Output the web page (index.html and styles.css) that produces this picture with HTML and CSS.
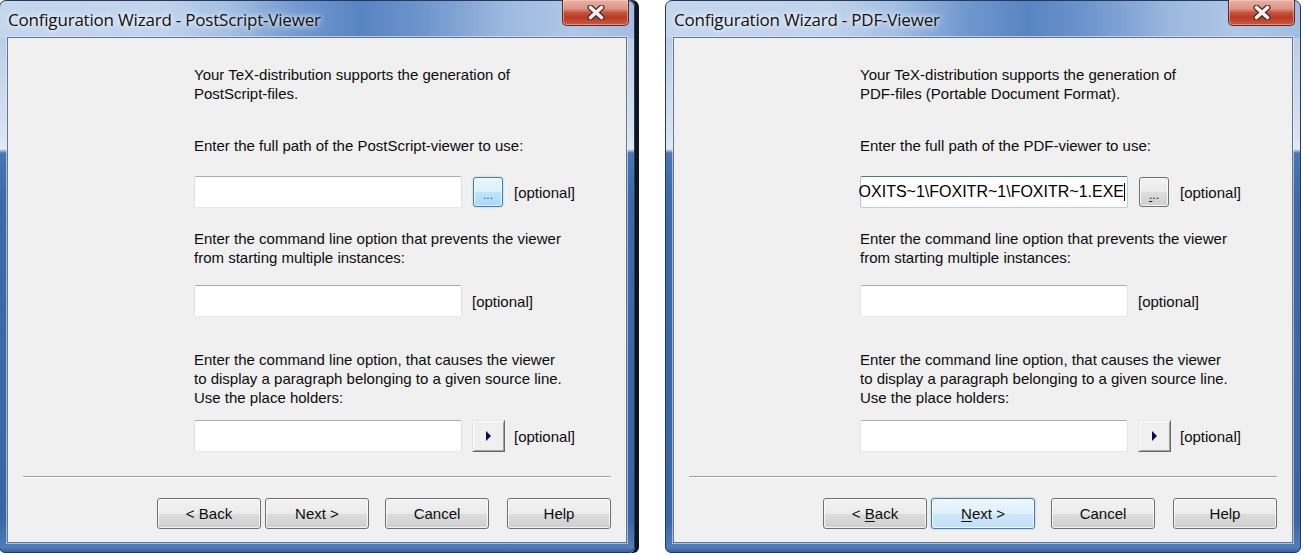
FILE: index.html
```html
<!DOCTYPE html>
<html>
<head>
<meta charset="utf-8">
<title>Configuration Wizard</title>
<link rel="stylesheet" href="styles.css">
</head>
<body>
<div class="window win-left">
  <div class="titlebar"><span class="title">Configuration Wizard - PostScript-Viewer</span></div>
  <div class="close"><svg width="20" height="15" viewBox="0 0 20 15"><path d="M4.5 2.5 L15.5 12.5 M15.5 2.5 L4.5 12.5" stroke="#4a2a26" stroke-width="6" stroke-linecap="round"/><path d="M4.5 2.5 L15.5 12.5 M15.5 2.5 L4.5 12.5" stroke="#f4f1f0" stroke-width="3.6" stroke-linecap="round"/></svg></div>
  <div class="client">
    <div class="content">
      <p class="para p1">Your TeX-distribution supports the generation of<br>PostScript-files.</p>
      <p class="para p2">Enter the full path of the PostScript-viewer to use:</p>
      <div class="row r1">
        <div class="input"></div>
        <div class="browse hover"><span>...</span></div>
        <span class="opt">[optional]</span>
      </div>
      <p class="para p3">Enter the command line option that prevents the viewer<br>from starting multiple instances:</p>
      <div class="row r2">
        <div class="input"></div>
        <span class="opt">[optional]</span>
      </div>
      <p class="para p4">Enter the command line option, that causes the viewer<br>to display a paragraph belonging to a given source line.<br>Use the place holders:</p>
      <div class="row r3">
        <div class="input"></div>
        <div class="arrow"><svg width="6" height="10" viewBox="0 0 6 10"><polygon points="0,0 5,5 0,10" fill="#0a0a50"/></svg></div>
        <span class="opt">[optional]</span>
      </div>
    </div>
    <div class="sep"></div>
    <div class="buttons">
      <div class="btn">&lt; Back</div>
      <div class="btn">Next &gt;</div>
      <div class="btn gap">Cancel</div>
      <div class="btn gap2">Help</div>
    </div>
  </div>
</div>

<div class="window win-right">
  <div class="titlebar"><span class="title">Configuration Wizard - PDF-Viewer</span></div>
  <div class="close"><svg width="20" height="15" viewBox="0 0 20 15"><path d="M4.5 2.5 L15.5 12.5 M15.5 2.5 L4.5 12.5" stroke="#4a2a26" stroke-width="6" stroke-linecap="round"/><path d="M4.5 2.5 L15.5 12.5 M15.5 2.5 L4.5 12.5" stroke="#f4f1f0" stroke-width="3.6" stroke-linecap="round"/></svg></div>
  <div class="client">
    <div class="content">
      <p class="para p1">Your TeX-distribution supports the generation of<br>PDF-files (Portable Document Format).</p>
      <p class="para p2">Enter the full path of the PDF-viewer to use:</p>
      <div class="row r1">
        <div class="input focus"><span class="val">OXITS~1\FOXITR~1\FOXITR~1.EXE</span><span class="caret"></span></div>
        <div class="browse"><span><u>.</u>..</span></div>
        <span class="opt">[optional]</span>
      </div>
      <p class="para p3">Enter the command line option that prevents the viewer<br>from starting multiple instances:</p>
      <div class="row r2">
        <div class="input"></div>
        <span class="opt">[optional]</span>
      </div>
      <p class="para p4">Enter the command line option, that causes the viewer<br>to display a paragraph belonging to a given source line.<br>Use the place holders:</p>
      <div class="row r3">
        <div class="input"></div>
        <div class="arrow"><svg width="6" height="10" viewBox="0 0 6 10"><polygon points="0,0 5,5 0,10" fill="#0a0a50"/></svg></div>
        <span class="opt">[optional]</span>
      </div>
    </div>
    <div class="sep"></div>
    <div class="buttons">
      <div class="btn">&lt;&nbsp;<u>B</u>ack</div>
      <div class="btn default"><u>N</u>ext &gt;</div>
      <div class="btn gap">Cancel</div>
      <div class="btn gap2">Help</div>
    </div>
  </div>
</div>
</body>
</html>
```
FILE: styles.css
```css
html, body {
  margin: 0;
  padding: 0;
  background: #ffffff;
  overflow: hidden;
}
body {
  display: flex;
  align-items: flex-start;
  width: 1304px;
  height: 555px;
  font-family: "Liberation Sans", Arial, sans-serif;
  font-size: 15px;
  color: #0c0c0c;
}
.window {
  position: relative;
  box-sizing: border-box;
  width: 636px;
  height: 553px;
  border: 1px solid #243a58;
  border-radius: 7px 7px 6px 6px;
  padding: 0 7px 9px 7px;
  display: flex;
  flex-direction: column;
  background:
    linear-gradient(90deg, #c4d6ee 0%, #c0d3ec 26%, #a3bfe3 36%, #7199cf 47%, #5884c2 57%, #6f96cd 67%, #9db9df 80%, #b0c7e6 90%, #a2bde1 100%) top / 100% 37px no-repeat,
    linear-gradient(180deg, #a9c1e2 0px, #bccfe9 40px, #d8e3f1 135px, #e2eaf5 148px, #4877b3 152px, #3d6aa7 200px, #3a66a3 520px, #4f7db9 546px, #3a63a0 100%);
}
.win-left {
  margin-left: -1px;
  box-shadow: 4px 0 0 #0f151e;
}
.win-right {
  margin-left: 30px;
}
.titlebar {
  height: 36px;
  flex: none;
  display: flex;
  align-items: center;
}
.title {
  margin-left: 1px;
  margin-top: 1px;
  font-family: "Open Sans", "Noto Sans", sans-serif;
  font-size: 17px;
  letter-spacing: -0.2px;
  color: #101010;
  text-shadow: 0 0 8px rgba(255,255,255,0.95), 0 0 4px rgba(255,255,255,0.9);
}
.close {
  position: absolute;
  top: -1px;
  right: 5px;
  box-sizing: border-box;
  width: 67px;
  height: 26px;
  border: 1px solid #5c2a25;
  border-top: none;
  border-radius: 0 0 5px 5px;
  background: linear-gradient(180deg, #e7b2a6 0%, #dc9585 35%, #c8563f 50%, #b93a25 70%, #d0583e 100%);
  box-shadow: inset 0 0 0 1px rgba(255,220,210,0.45);
  display: flex;
  align-items: center;
  justify-content: center;
}
.client {
  flex: 1;
  box-sizing: border-box;
  background: #f0f0f0;
  border: 1px solid #62768f;
  box-shadow: 0 0 0 1px rgba(230,238,248,0.6);
  display: flex;
  flex-direction: column;
}
.content {
  margin-left: 186px;
  padding-top: 27px;
}
.para {
  margin: 0;
  line-height: 19px;
  white-space: nowrap;
}
.p2 { margin-top: 33px; }
.p3 { margin-top: 21px; }
.p4 { margin-top: 33px; }
.row {
  display: flex;
  align-items: center;
}
.r1 { margin-top: 21px; }
.r2 { margin-top: 18px; }
.r3 { margin-top: 13px; }
.input {
  box-sizing: border-box;
  width: 268px;
  height: 32px;
  background: #fff;
  border: 1px solid #dfe3ea;
  border-top-color: #abadb3;
  border-bottom-color: #e3e9ef;
  border-radius: 2px;
  display: flex;
  align-items: center;
  justify-content: flex-end;
  white-space: nowrap;
}
.input.focus {
  border-color: #b5cfe7;
  border-top-color: #3d7bad;
  border-left-color: #a4c9e3;
}
.val {
  flex: none;
  font-size: 16px;
  color: #000;
}
.caret {
  flex: none;
  width: 1px;
  height: 18px;
  background: #000;
  margin: 0 2px 0 0;
}
.browse {
  box-sizing: border-box;
  width: 30px;
  height: 30px;
  margin-left: 11px;
  border: 1px solid #707070;
  border-radius: 3px;
  background: linear-gradient(180deg, #f2f2f2 0%, #ebebeb 50%, #dddddd 51%, #cfcfcf 100%);
  box-shadow: inset 0 0 0 1px rgba(255,255,255,0.8);
  display: flex;
  justify-content: center;
  align-items: flex-end;
  font-size: 12px;
  line-height: 12px;
  padding-bottom: 5px;
  color: #202020;
}
.browse.hover {
  border-color: #3c7fb1;
  background: linear-gradient(180deg, #eaf6fd 0%, #d9f0fc 50%, #bee6fd 51%, #a7d9f5 100%);
  box-shadow: inset 0 0 0 1px rgba(255,255,255,0.7), 0 0 2px rgba(60,127,177,0.4);
  color: #5a4a80;
}
.opt {
  margin-left: 11px;
  white-space: nowrap;
}
.r2 .opt { margin-left: 10px; }
.r3 .opt { margin-left: 9px; }
.arrow {
  box-sizing: border-box;
  width: 33px;
  height: 32px;
  margin-left: 10px;
  background: #f0f0f0;
  border: 1px solid;
  border-color: #e3e3e3 #696969 #696969 #e3e3e3;
  box-shadow: inset 1px 1px 0 #ffffff, inset -1px -1px 0 #a0a0a0;
  display: flex;
  align-items: center;
  justify-content: center;
}
.sep {
  margin: 24px 15px 0 15px;
  height: 1px;
  background: #a0a0a0;
  border-bottom: 1px solid #ffffff;
}
.buttons {
  display: flex;
  justify-content: flex-end;
  margin: 20px 15px 0 0;
}
.btn {
  box-sizing: border-box;
  width: 104px;
  height: 31px;
  margin-left: 4px;
  border: 1px solid #707070;
  border-radius: 3px;
  background: linear-gradient(180deg, #f2f2f2 0%, #ebebeb 50%, #dddddd 51%, #cfcfcf 100%);
  box-shadow: inset 0 0 0 1px rgba(255,255,255,0.75);
  display: flex;
  align-items: center;
  justify-content: center;
  white-space: nowrap;
  color: #0c0c0c;
}
.btn.gap { margin-left: 16px; }
.btn.gap2 { margin-left: 18px; }
.btn.default {
  border-color: #3c7fb1;
  background: linear-gradient(180deg, #ecf6fd 0%, #e0f0fb 50%, #cfe7f8 51%, #c2e0f6 100%);
  box-shadow: inset 0 0 0 1px rgba(255,255,255,0.8), 0 0 2px rgba(60,127,177,0.5);
}
u { text-decoration-thickness: 1px; text-underline-offset: 2px; }
```
